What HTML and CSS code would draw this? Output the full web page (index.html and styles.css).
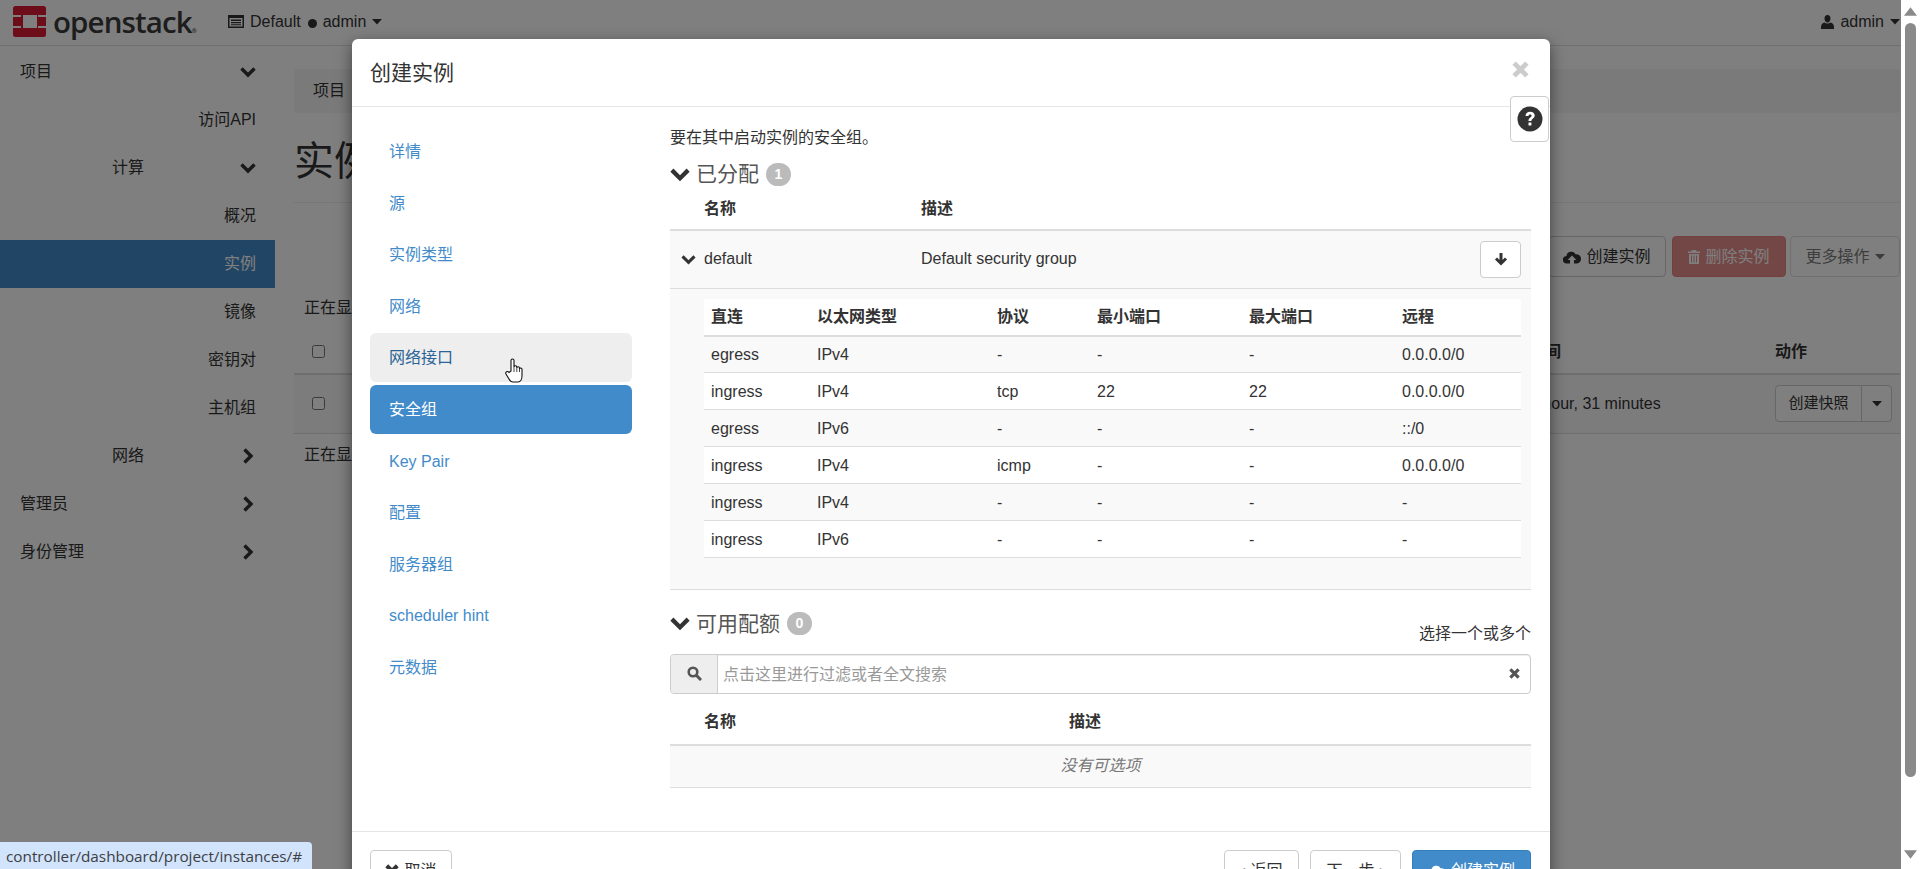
FILE: index.html
```html
<!DOCTYPE html>
<html lang="zh-CN">
<head>
    <meta charset="UTF-8">
    <title>实例 - OpenStack Dashboard</title>
    <link rel="stylesheet" href="styles.css">
</head>
<body>
    <svg class="icon-defs" width="0" height="0">
        <symbol id="chev-down" viewBox="0 0 16 12"><path d="M1.5 2.5 8 9l6.5-6.5" fill="none" stroke="currentColor" stroke-width="3.4"/></symbol>
        <symbol id="chev-right" viewBox="0 0 12 16"><path d="M2.5 1.5 9 8l-6.5 6.5" fill="none" stroke="currentColor" stroke-width="3.4"/></symbol>
        <symbol id="caret" viewBox="0 0 10 6"><path d="M0 0h10L5 5.5z" fill="currentColor"/></symbol>
        <symbol id="cloud-up" viewBox="0 0 18 14"><path d="M4 13.5a3.8 3.8 0 0 1-.6-7.6A5 5 0 0 1 12.6 4.2 4.7 4.7 0 0 1 14 13.5h-3V10h2.4L9 5.4 4.6 10H7v3.500z" fill="currentColor"/></symbol>
        <symbol id="trash" viewBox="0 0 12 14"><path d="M4 0h4l.6 1.500H12V3H0V1.500h3.400zM1 4h10v10H1zm2 1.500V12.500h1V5.500zm2.500 0V12.500h1V5.500zm2.500 0V12.500h1V5.500z" fill="currentColor" fill-rule="evenodd"/></symbol>
        <symbol id="remove" viewBox="0 0 16 16"><path d="M2 2l12 12M14 2 2 14" stroke="currentColor" stroke-width="4.600" fill="none"/></symbol>
    </svg>

    <div class="page">
        <div class="content">
            <header class="topbar">
                <svg class="logo" viewBox="0 0 33 31">
                    <rect width="33" height="31" rx="2.500" fill="#da1a32"/>
                    <path d="M10 9h14v13H10zM0 9h8v2H0zM0 20h8v2H0zM25 9h8v2h-8zM25 20h8v2h-8z" fill="#fff"/>
                </svg>
                <span class="logo-text">openstack<span class="logo-reg">®</span></span>
                <svg class="project-icon" viewBox="0 0 16 13">
                    <path fill-rule="evenodd" d="M0 0h16v13H0zM1.500 3v8.500h13V3zM3 4.500h10V6H3zm0 2.500h10v1.300H3zm0 2.200h10v1H3z" fill="currentColor"/>
                </svg>
                <span class="top-text">Default</span>
                <span class="dot"></span>
                <span class="top-text">admin</span>
                <svg class="caret"><use href="#caret"/></svg>
                <span class="spacer"></span>
                <svg class="user-icon" viewBox="0 0 13 14">
                    <path d="M6.500 0c1.900 0 3 1.500 3 3.500S8.300 7.500 6.500 7.500 3.500 5.500 3.500 3.500 4.600 0 6.500 0zM0 12c0-2.500 1.500-4 3.500-4.500 1.600 1.200 4.400 1.200 6 0C11.500 8 13 9.500 13 12v2H0z" fill="currentColor"/>
                </svg>
                <span class="top-text">admin</span>
                <svg class="caret"><use href="#caret"/></svg>
            </header>

            <div class="layout">
                <nav class="sidebar">
                    <a class="side-row side-top">项目<svg class="side-down"><use href="#chev-down"/></svg></a>
                    <a class="side-row side-leaf">访问API</a>
                    <a class="side-row side-sub">计算<svg class="side-down"><use href="#chev-down"/></svg></a>
                    <a class="side-row side-leaf">概况</a>
                    <a class="side-row side-leaf side-active">实例</a>
                    <a class="side-row side-leaf">镜像</a>
                    <a class="side-row side-leaf">密钥对</a>
                    <a class="side-row side-leaf">主机组</a>
                    <a class="side-row side-sub">网络<svg class="side-right"><use href="#chev-right"/></svg></a>
                    <a class="side-row side-top">管理员<svg class="side-right"><use href="#chev-right"/></svg></a>
                    <a class="side-row side-top">身份管理<svg class="side-right"><use href="#chev-right"/></svg></a>
                </nav>

                <main class="main">
                    <div class="breadcrumb">项目</div>
                    <h1 class="page-title">实例</h1>
                    <div class="actions">
                        <button class="btn btn-create"><svg class="btn-icon"><use href="#cloud-up"/></svg>创建实例</button>
                        <button class="btn btn-danger"><svg class="btn-trash"><use href="#trash"/></svg>删除实例</button>
                        <button class="btn btn-muted">更多操作<svg class="caret"><use href="#caret"/></svg></button>
                    </div>
                    <div class="count">正在显示 1 项</div>
                    <table class="instances">
                        <colgroup><col class="inst-c1"><col class="inst-c2"><col class="inst-c3"></colgroup>
                        <thead>
                            <tr><th><input type="checkbox"></th><th>时间</th><th>动作</th></tr>
                        </thead>
                        <tbody>
                            <tr>
                                <td><input type="checkbox"></td>
                                <td>1 hour, 31 minutes</td>
                                <td>
                                    <div class="split">
                                        <span class="split-main">创建快照</span>
                                        <span class="split-arrow"><svg class="caret"><use href="#caret"/></svg></span>
                                    </div>
                                </td>
                            </tr>
                        </tbody>
                    </table>
                    <div class="count count-bottom">正在显示 1 项</div>
                </main>
            </div>
        </div>
        <div class="scrollbar">
            <svg class="scroll-arrow" viewBox="0 0 12 8"><path d="M6 0l6 8H0z" fill="currentColor"/></svg>
            <div class="scroll-thumb"></div>
            <svg class="scroll-arrow scroll-arrow-down" viewBox="0 0 12 8"><path d="M0 0h12L6 8z" fill="currentColor"/></svg>
        </div>
    </div>

    <div class="backdrop"></div>

    <section class="modal">
        <div class="modal-header">
            <span class="modal-title">创建实例</span>
            <svg class="modal-close"><use href="#remove"/></svg>
        </div>
        <div class="help-btn">
            <svg viewBox="0 0 26 26" width="26" height="26">
                <circle cx="13" cy="13" r="12.500" fill="#333"/>
                <path d="M8.500 10c.2-2.800 2.200-4.200 4.700-4.200 2.700 0 4.500 1.500 4.500 3.700 0 2.900-3.300 3-3.300 5.500h-2.900c0-3.600 3.100-3.700 3.100-5.300 0-.8-.6-1.300-1.500-1.300-1 0-1.600.6-1.700 1.600zM11.500 16.500h2.900v3h-2.900z" fill="#fff"/>
            </svg>
        </div>

        <div class="modal-body">
            <ul class="wizard">
                <li class="wizard-item">详情</li>
                <li class="wizard-item">源</li>
                <li class="wizard-item">实例类型</li>
                <li class="wizard-item">网络</li>
                <li class="wizard-item wizard-hover">网络接口</li>
                <li class="wizard-item wizard-active">安全组</li>
                <li class="wizard-item">Key Pair</li>
                <li class="wizard-item">配置</li>
                <li class="wizard-item">服务器组</li>
                <li class="wizard-item">scheduler hint</li>
                <li class="wizard-item">元数据</li>
            </ul>

            <div class="panel">
                <p class="panel-intro">要在其中启动实例的安全组。</p>
                <h3 class="section-title">
                    <svg class="section-chev"><use href="#chev-down"/></svg>已分配<span class="badge">1</span>
                </h3>
                <table class="tbl">
                    <colgroup><col class="sg-c1"><col class="sg-c2"><col class="sg-c3"><col class="sg-c4"></colgroup>
                    <thead>
                        <tr><th></th><th>名称</th><th>描述</th><th></th></tr>
                    </thead>
                    <tbody>
                        <tr class="sg-row">
                            <td><svg class="row-chev"><use href="#chev-down"/></svg></td>
                            <td>default</td>
                            <td>Default security group</td>
                            <td class="cell-end">
                                <button class="btn-down">
                                    <svg viewBox="0 0 14 14" width="14" height="14"><path d="M7 1v10M2 6.500l5 5 5-5" fill="none" stroke="#333" stroke-width="3"/></svg>
                                </button>
                            </td>
                        </tr>
                        <tr class="sg-detail">
                            <td colspan="4">
                                <table class="rules">
                                    <colgroup><col class="r-c1"><col class="r-c2"><col class="r-c3"><col class="r-c4"><col class="r-c5"><col class="r-c6"></colgroup>
                                    <thead>
                                        <tr><th>直连</th><th>以太网类型</th><th>协议</th><th>最小端口</th><th>最大端口</th><th>远程</th></tr>
                                    </thead>
                                    <tbody>
                                        <tr><td>egress</td><td>IPv4</td><td>-</td><td>-</td><td>-</td><td>0.0.0.0/0</td></tr>
                                        <tr><td>ingress</td><td>IPv4</td><td>tcp</td><td>22</td><td>22</td><td>0.0.0.0/0</td></tr>
                                        <tr><td>egress</td><td>IPv6</td><td>-</td><td>-</td><td>-</td><td>::/0</td></tr>
                                        <tr><td>ingress</td><td>IPv4</td><td>icmp</td><td>-</td><td>-</td><td>0.0.0.0/0</td></tr>
                                        <tr><td>ingress</td><td>IPv4</td><td>-</td><td>-</td><td>-</td><td>-</td></tr>
                                        <tr><td>ingress</td><td>IPv6</td><td>-</td><td>-</td><td>-</td><td>-</td></tr>
                                    </tbody>
                                </table>
                            </td>
                        </tr>
                    </tbody>
                </table>

                <div class="avail-head">
                    <h3 class="section-title">
                        <svg class="section-chev"><use href="#chev-down"/></svg>可用配额<span class="badge">0</span>
                    </h3>
                    <span class="avail-hint">选择一个或多个</span>
                </div>
                <div class="search">
                    <span class="search-addon">
                        <svg viewBox="0 0 15 15" width="15" height="15"><circle cx="6" cy="6" r="4.300" fill="none" stroke="#555" stroke-width="2.600"/><path d="M9.300 9.300 14 14" stroke="#555" stroke-width="3"/></svg>
                    </span>
                    <input class="search-input" placeholder="点击这里进行过滤或者全文搜索">
                    <svg class="search-clear"><use href="#remove"/></svg>
                </div>
                <table class="tbl tbl-avail">
                    <colgroup><col class="av-c1"><col class="av-c2"><col class="av-c3"></colgroup>
                    <thead>
                        <tr><th></th><th>名称</th><th>描述</th></tr>
                    </thead>
                    <tbody>
                        <tr class="empty-row"><td colspan="3">没有可选项</td></tr>
                    </tbody>
                </table>
            </div>
        </div>

        <div class="modal-footer">
            <button class="btn btn-cancel"><svg class="btn-x"><use href="#remove"/></svg>取消</button>
            <span class="spacer"></span>
            <button class="btn btn-back">‹ 返回</button>
            <button class="btn btn-next">下一步 ›</button>
            <button class="btn btn-primary"><svg class="btn-icon"><use href="#cloud-up"/></svg>创建实例</button>
        </div>
    </section>

    <svg class="hand" viewBox="0 0 18 25">
        <path d="M6 13V2.500C6 .5 9 .5 9 2.500V9c0-1.700 2.800-1.700 2.800 0v1c0-1.600 2.700-1.600 2.700 0v1c0-1.400 2.500-1.400 2.500 .3V18c0 3-1.500 6-4 6H8c-2 0-3-1-4-3L1 16c-1-2 1.500-3.500 3-1.500z" fill="#fff" stroke="#111" stroke-width="1.100"/>
        <path d="M9 9v5M11.800 10v4M14.500 11v3" stroke="#111" stroke-width=".8" fill="none"/>
    </svg>

    <div class="status-bubble">controller/dashboard/project/instances/#</div>
</body>
</html>
```

FILE: styles.css
```css
* {
    box-sizing: border-box;
}
html, body {
    margin: 0;
    height: 869px;
    overflow: hidden;
}
body {
    font-family: "Liberation Sans", "Noto Sans CJK SC", sans-serif;
    font-size: 16px;
    line-height: 20px;
    color: #333;
    background: #fff;
}
button, input {
    font: inherit;
}
svg {
    display: block;
    flex: none;
}
.icon-defs {
    position: absolute;
}
.spacer {
    flex: 1;
}
.caret {
    width: 10px;
    height: 6px;
}

/* page under the modal */
.page {
    display: flex;
    height: 869px;
}
.content {
    width: 1901px;
    flex: none;
}
.scrollbar {
    flex: 1;
    display: flex;
    flex-direction: column;
    align-items: center;
    padding-top: 7px;
    color: #8a8a8a;
    background: #fff;
}
.scroll-arrow {
    width: 13px;
    height: 9px;
}
.scroll-arrow-down {
    margin-top: 73px;
}
.scroll-thumb {
    width: 11px;
    height: 754px;
    margin-top: 7px;
    border-radius: 6px;
    background: #8a8a8a;
}
.topbar {
    display: flex;
    align-items: center;
    height: 46px;
    padding: 0 1px 2px 13px;
    border-bottom: 1px solid #e0e0e0;
}
.logo {
    width: 33px;
    height: 31px;
}
.logo-text {
    width: 175px;
    height: 40px;
    margin-left: 7px;
    font-family: "Open Sans", sans-serif;
    font-size: 29.5px;
    font-weight: 600;
    line-height: 40px;
    letter-spacing: -.9px;
    color: #3a3a3a;
}
.logo-reg {
    font-size: 6px;
    letter-spacing: 0;
}
.project-icon {
    width: 16px;
    height: 13px;
    margin-right: 6px;
}
.top-text {
    margin-right: 6px;
}
.dot {
    width: 9px;
    height: 9px;
    margin: 3px 6px 0 1px;
    border-radius: 50%;
    background: #333;
}
.user-icon {
    width: 13px;
    height: 14px;
    margin-right: 6px;
}
.layout {
    display: flex;
}
.sidebar {
    width: 275px;
    flex: none;
    padding-top: 2px;
}
.side-row {
    display: flex;
    align-items: center;
    height: 48px;
    padding-right: 19px;
}
.side-top {
    justify-content: space-between;
    padding-left: 20px;
}
.side-sub {
    justify-content: space-between;
    padding-left: 112px;
}
.side-leaf {
    justify-content: flex-end;
}
.side-active {
    color: #fff;
    background: #428bca;
}
.side-down {
    width: 16px;
    height: 12px;
}
.side-right {
    width: 12px;
    height: 16px;
    margin-right: 2px;
}
.main {
    flex: 1;
    padding: 23px 1px 0 19px;
}
.breadcrumb {
    height: 44px;
    padding: 12px 19px;
    border-radius: 4px;
    background: #f5f5f5;
}
.page-title {
    height: 90px;
    margin: 0;
    padding-top: 24px;
    border-bottom: 1px solid #eee;
    font-size: 40px;
    font-weight: 400;
    line-height: 48px;
}
.actions {
    display: flex;
    justify-content: flex-end;
    margin-top: 33px;
}
.btn {
    display: flex;
    align-items: center;
    justify-content: center;
    height: 41px;
    padding: 0;
    border: 1px solid #ccc;
    border-radius: 4px;
    color: #333;
    background: #fff;
}
.btn-create {
    width: 118px;
}
.btn-danger {
    width: 114px;
    margin-left: 6px;
    color: #fff;
    background: #d9534f;
    border-color: #d43f3a;
    opacity: .65;
}
.btn-muted {
    width: 110px;
    margin-left: 4px;
    opacity: .65;
}
.btn-muted .caret {
    margin-left: 5px;
}
.btn-icon {
    width: 18px;
    height: 14px;
    margin-right: 5px;
}
.btn-trash {
    width: 12px;
    height: 14px;
    margin-right: 5px;
}
.btn-x {
    width: 14px;
    height: 14px;
    margin-right: 5px;
}
.count {
    height: 20px;
    margin-top: 21px;
    padding-left: 10px;
}
.count-bottom {
    margin-top: 11px;
}
.instances {
    width: 100%;
    margin-top: 12px;
    table-layout: fixed;
    border-collapse: collapse;
}
.inst-c1 { width: 1227px; }
.inst-c2 { width: 246px; }
.instances th {
    height: 44px;
    padding: 0 8px 0 18px;
    border-bottom: 2px solid #ddd;
    text-align: left;
}
.instances th + th,
.instances td + td {
    padding-left: 8px;
}
.instances td {
    height: 59px;
    padding: 0 8px 0 18px;
    border-bottom: 1px solid #ddd;
    background: #f9f9f9;
}
.instances input {
    display: block;
    margin: 0;
}
.split {
    display: flex;
    height: 37px;
    border: 1px solid #ccc;
    border-radius: 4px;
    background: #fff;
}
.split-main {
    width: 86px;
    padding-top: 7px;
    border-right: 1px solid #ccc;
    font-size: 15px;
    text-align: center;
}
.split-arrow {
    flex: 1;
    display: flex;
    align-items: center;
    justify-content: center;
}

/* overlay pieces */
.backdrop {
    position: absolute;
    left: 0;
    top: 0;
    width: 1901px;
    height: 869px;
    background: rgba(0, 0, 0, .5);
}
.modal {
    position: absolute;
    left: 352px;
    top: 39px;
    width: 1198px;
    border-radius: 6px;
    background: #fff;
    box-shadow: 0 5px 15px rgba(0, 0, 0, .5);
}
.modal-header {
    display: flex;
    justify-content: space-between;
    align-items: center;
    height: 68px;
    padding: 0 21px 0 18px;
    border-bottom: 1px solid #e5e5e5;
}
.modal-title {
    font-size: 21px;
}
.modal-close {
    width: 17px;
    height: 17px;
    margin-top: -6px;
    color: #ccc;
}
.help-btn {
    position: absolute;
    left: 1158px;
    top: 57px;
    display: flex;
    align-items: center;
    justify-content: center;
    width: 39px;
    height: 46px;
    border: 1px solid #ccc;
    border-radius: 4px;
    background: #fff;
}
.modal-body {
    display: flex;
    height: 724px;
}
.wizard {
    width: 262px;
    flex: none;
    display: flex;
    flex-direction: column;
    gap: 2.6px;
    margin: 20px 0 0 18px;
    padding: 0;
    list-style: none;
}
.wizard-item {
    height: 49px;
    padding: 15px 19px 0;
    border-radius: 6px;
    color: #428bca;
}
.wizard-hover {
    color: #2a6496;
    background: #eee;
}
.wizard-active {
    color: #fff;
    background: #428bca;
}
.panel {
    width: 861px;
    margin-left: 38px;
}
.panel-intro {
    margin: 21px 0 0;
}
.section-title {
    display: flex;
    align-items: center;
    height: 30px;
    margin: 11px 0 0;
    font-size: 21px;
    font-weight: 400;
    color: #555;
}
.section-chev {
    width: 20px;
    height: 15px;
    margin-right: 6px;
    color: #333;
}
.badge {
    width: 25px;
    height: 23px;
    margin-left: 7px;
    border-radius: 12px;
    background: #bbb;
    color: #fff;
    font-size: 14px;
    font-weight: 700;
    line-height: 23px;
    text-align: center;
}
.tbl {
    width: 100%;
    table-layout: fixed;
    border-collapse: collapse;
}
.tbl th {
    height: 41px;
    padding: 0 7px;
    border-bottom: 2px solid #ddd;
    text-align: left;
}
.sg-c1 { width: 27px; }
.sg-c2 { width: 217px; }
.sg-c4 { width: 60px; }
.sg-row td {
    height: 58px;
    padding: 0 7px;
    border-bottom: 1px solid #ddd;
    background: #f9f9f9;
}
.sg-row .row-chev {
    width: 15px;
    height: 11px;
    margin-left: 4px;
}
.sg-row .cell-end {
    padding: 0 10px 0 0;
}
.btn-down {
    display: flex;
    align-items: center;
    justify-content: center;
    width: 41px;
    height: 37px;
    margin-left: auto;
    padding: 0;
    border: 1px solid #ccc;
    border-radius: 4px;
    background: #fff;
}
.sg-detail > td {
    height: 301px;
    padding: 10px 10px 0 34px;
    border-bottom: 1px solid #ddd;
    background: #f9f9f9;
    vertical-align: top;
}
.rules {
    width: 100%;
    table-layout: fixed;
    border-collapse: collapse;
    background: #fff;
}
.r-c1 { width: 106px; }
.r-c2 { width: 180px; }
.r-c3 { width: 100px; }
.r-c4 { width: 152px; }
.r-c5 { width: 153px; }
.rules th {
    height: 37px;
    padding: 1px 7px 0;
    border-bottom: 2px solid #ddd;
    text-align: left;
}
.rules td {
    height: 37px;
    padding: 1px 7px 0;
    border-bottom: 1px solid #ddd;
}
.rules tbody tr:nth-child(odd) td {
    background: #f9f9f9;
}
.avail-head {
    display: flex;
    justify-content: space-between;
    align-items: flex-start;
    height: 45px;
    margin-top: 19px;
}
.avail-head .section-title {
    margin-top: 0;
}
.avail-hint {
    margin-top: 15px;
}
.search {
    display: flex;
    align-items: center;
    height: 40px;
    border: 1px solid #ccc;
    border-radius: 4px;
    box-shadow: inset 0 1px 1px rgba(0, 0, 0, .075);
}
.search-addon {
    display: flex;
    align-items: center;
    justify-content: center;
    width: 47px;
    height: 100%;
    border-right: 1px solid #ccc;
    border-radius: 4px 0 0 4px;
    background: #eee;
}
.search-input {
    flex: 1;
    min-width: 0;
    padding: 2px 5px 0;
    border: 0;
    outline: 0;
    background: transparent;
}
.search-input::placeholder {
    color: #999;
}
.search-clear {
    width: 11px;
    height: 13px;
    margin-right: 10px;
    color: #555;
}
.av-c1 { width: 27px; }
.av-c2 { width: 365px; }
.tbl-avail th {
    height: 51px;
    padding-top: 6px;
}
.empty-row td {
    height: 43px;
    border-bottom: 1px solid #ddd;
    background: #f9f9f9;
    color: #777;
    font-style: italic;
    text-align: center;
}
.modal-footer {
    display: flex;
    gap: 11px;
    padding: 18px 19px 18px 18px;
    border-top: 1px solid #e5e5e5;
}
.btn-cancel {
    width: 82px;
}
.btn-back {
    width: 75px;
}
.btn-next {
    width: 91px;
}
.btn-primary {
    width: 119px;
    color: #fff;
    background: #428bca;
    border-color: #357ebd;
}
.hand {
    position: absolute;
    left: 505px;
    top: 358px;
    width: 18px;
    height: 25px;
}
.status-bubble {
    position: absolute;
    left: 0;
    bottom: 0;
    height: 27px;
    padding: 4px 10px 0 6px;
    border-top-right-radius: 4px;
    background: #d2e3fc;
    font-family: "Open Sans", sans-serif;
    font-size: 15.3px;
    color: #3c4043;
}
```
